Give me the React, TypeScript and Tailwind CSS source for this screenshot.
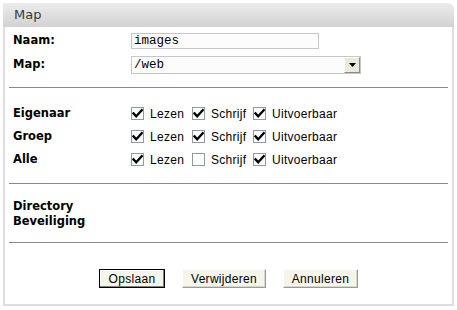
import React from "react";

const Box = ({ checked }: { checked: boolean }) => (
  <span className="inline-flex h-[13px] w-[13px] items-center justify-center border border-[#8c9aa8] bg-white">
    {checked && (
      <svg width="11" height="11" viewBox="0 0 11 11">
        <path d="M1.5 5.3 L4.2 8.2 L9.8 2.2" fill="none" stroke="#000" strokeWidth="2.3" strokeLinecap="square" />
      </svg>
    )}
  </span>
);

const Opt = ({ checked, label, w }: { checked: boolean; label: string; w?: string }) => (
  <div className={`flex items-center ${w ?? ""}`}>
    <Box checked={checked} />
    <span className="ml-[6px] text-[12px] tracking-[0.3px] text-black">{label}</span>
  </div>
);

const lbl = "w-[118px] text-[11.5px] font-bold text-black";
const dv = { fontFamily: "'DejaVu Sans', sans-serif" };

const PermRow = ({ label, a, b, c }: { label: string; a: boolean; b: boolean; c: boolean }) => (
  <div className="flex h-[23px] items-center">
    <div className={lbl} style={dv}>
      {label}
    </div>
    <Opt checked={a} label="Lezen" w="w-[61px]" />
    <Opt checked={b} label="Schrijf" w="w-[61px]" />
    <Opt checked={c} label="Uitvoerbaar" />
  </div>
);

const Btn = ({ label, w, def }: { label: string; w: string; def?: boolean }) => (
  <div
    className={`flex h-[19px] ${w} items-center justify-center bg-[#f6f5ec] text-[12px] tracking-[0.3px] text-black ${
      def
        ? "border border-black shadow-[inset_-1px_-1px_0_#808080,inset_1px_1px_0_#fff]"
        : "border-t border-l border-t-[#fff] border-l-[#fff] border-r border-b border-r-[#9a9a9a] border-b-[#9a9a9a] shadow-[inset_-1px_-1px_0_#d8d6cc]"
    }`}
  >
    {label}
  </div>
);

export default function App() {
  return (
    <div className="h-[310px] w-[457px] bg-white pl-[3px] pt-[3px]" style={{ fontFamily: "'Liberation Sans', Arial, sans-serif" }}>
      <div className="w-[451px]">
        <div className="flex h-[24px] items-center rounded-tr-[6px] bg-gradient-to-b from-[#ececec] to-[#d2d2d2] pl-[11px]">
          <span className="text-[13px] text-[#3a3a3a]" style={dv}>
            Map
          </span>
        </div>
        <div className="border-x-2 border-b-2 border-[#dedede] px-[4px] pb-[16px] pt-[2px]">
          <div className="px-[4px]">
            <div className="flex h-[24px] items-center">
              <div className={lbl} style={dv}>
                Naam:
              </div>
              <div className="flex h-[16px] w-[188px] items-center border border-[#c6c6c6] bg-[#fcfcfc] pl-[2px]">
                <span className="text-[12.5px] text-black" style={{ fontFamily: "'Liberation Mono', monospace" }}>
                  images
                </span>
              </div>
            </div>
            <div className="flex h-[24px] items-center">
              <div className={lbl} style={dv}>
                Map:
              </div>
              <div className="flex h-[18px] w-[230px] items-center border border-[#c6c6c6] bg-[#fcfcfc] pl-[2px]">
                <span className="flex-1 text-[12.5px] text-black" style={{ fontFamily: "'Liberation Mono', monospace" }}>
                  /web
                </span>
                <div className="flex h-[16px] w-[16px] items-center justify-center border-t border-l border-t-white border-l-white border-r border-b border-r-[#8a8a8a] border-b-[#8a8a8a] bg-[#ece9d8]">
                  <svg width="7" height="4" viewBox="0 0 7 4">
                    <path d="M0 0 H7 L3.5 4 Z" fill="#000" />
                  </svg>
                </div>
              </div>
            </div>
          </div>
          <div className="mt-[10px] border-t border-[#888]" />
          <div className="mt-[14px] px-[4px]">
            <PermRow label="Eigenaar" a b c />
            <PermRow label="Groep" a b c />
            <PermRow label="Alle" a b={false} c />
          </div>
          <div className="mt-[12px] border-t border-[#888]" />
          <div className="mt-[15px] px-[4px] text-[11.5px] font-bold leading-[15px] text-black" style={dv}>
            Directory
            <br />
            Beveiliging
          </div>
          <div className="mt-[13px] border-t border-[#888]" />
          <div className="mt-[26px] flex justify-center gap-[17px]">
            <Btn label="Opslaan" w="w-[66px]" def />
            <Btn label="Verwijderen" w="w-[84px]" />
            <Btn label="Annuleren" w="w-[75px]" />
          </div>
        </div>
      </div>
    </div>
  );
}
